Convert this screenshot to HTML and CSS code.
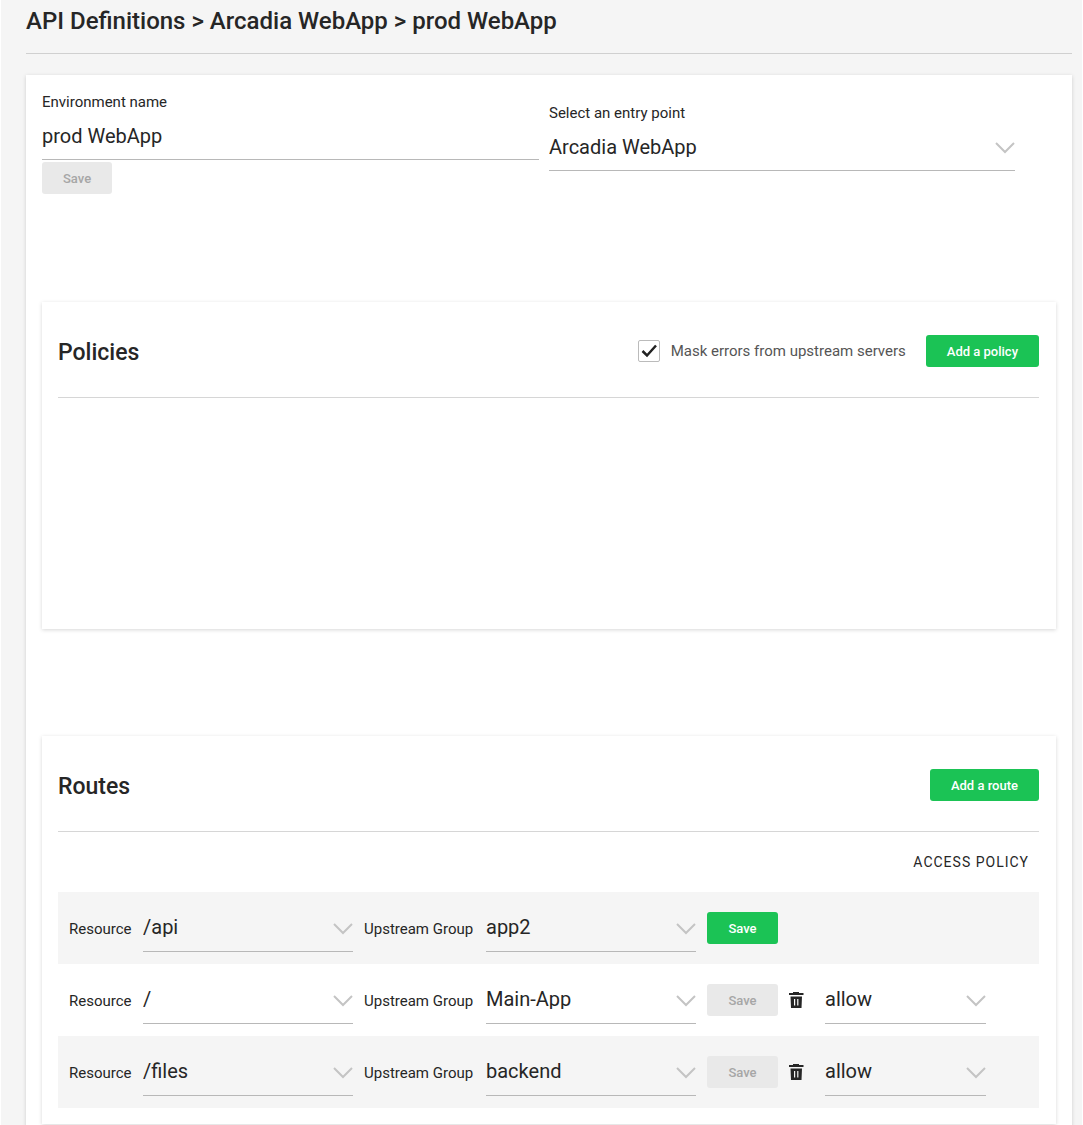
FILE: index.html
```html
<!DOCTYPE html>
<html lang="en">
<head>
<meta charset="utf-8">
<meta name="viewport" content="width=device-width, initial-scale=1">
<title>prod WebApp</title>
<link rel="stylesheet" href="styles.css">
</head>
<body>
<svg class="sprite" aria-hidden="true">
  <symbol id="chevron" viewBox="0 0 20 12"><path d="M1 1l9 9 9-9" fill="none" stroke="currentColor" stroke-width="2"/></symbol>
  <symbol id="trash" viewBox="0 0 16 16"><path fill="currentColor" fill-rule="evenodd" d="M4 0h6v1h4.500v2H0V1h4zM1.500 4.500h11.500l-.5 11.500h-10.500zM5 7v6.500h1.200V7zM8.200 7v6.500h1.200V7z"/></symbol>
</svg>
<main class="page">
  <h1 class="page-title">API Definitions &gt; Arcadia WebApp &gt; prod WebApp</h1>
  <div class="card">
    <div class="settings">
      <form class="setting">
        <label class="field-label" for="env-name">Environment name</label>
        <input class="field" id="env-name" type="text" value="prod WebApp">
        <button class="button form-save" type="button" disabled>Save</button>
      </form>
      <div class="setting setting-entry">
        <label class="field-label" for="entry">Select an entry point</label>
        <div class="picker">
          <select class="field" id="entry"><option>Arcadia WebApp</option></select>
          <svg class="chevron"><use href="#chevron"/></svg>
        </div>
      </div>
    </div>

    <section class="panel policies">
      <header class="panel-header">
        <h2 class="panel-title">Policies</h2>
        <label class="check"><input class="check-box" type="checkbox" checked>Mask errors from upstream servers</label>
        <button class="button" type="button">Add a policy</button>
      </header>
    </section>

    <section class="panel">
      <header class="panel-header">
        <h2 class="panel-title">Routes</h2>
        <button class="button" type="button">Add a route</button>
      </header>
      <div class="column-head">Access policy</div>
      <ul class="routes">
        <li class="route">
          <label class="row-label" for="res-1">Resource</label>
          <div class="picker"><select class="field" id="res-1"><option>/api</option></select><svg class="chevron"><use href="#chevron"/></svg></div>
          <label class="row-label" for="up-1">Upstream Group</label>
          <div class="picker"><select class="field" id="up-1"><option>app2</option></select><svg class="chevron"><use href="#chevron"/></svg></div>
          <button class="button" type="button">Save</button>
        </li>
        <li class="route">
          <label class="row-label" for="res-2">Resource</label>
          <div class="picker"><select class="field" id="res-2"><option>/</option></select><svg class="chevron"><use href="#chevron"/></svg></div>
          <label class="row-label" for="up-2">Upstream Group</label>
          <div class="picker"><select class="field" id="up-2"><option>Main-App</option></select><svg class="chevron"><use href="#chevron"/></svg></div>
          <button class="button" type="button" disabled>Save</button>
          <button class="icon-button" type="button" aria-label="Delete route"><svg class="trash"><use href="#trash"/></svg></button>
          <div class="picker access"><select class="field" aria-label="Access policy"><option>allow</option></select><svg class="chevron"><use href="#chevron"/></svg></div>
        </li>
        <li class="route">
          <label class="row-label" for="res-3">Resource</label>
          <div class="picker"><select class="field" id="res-3"><option>/files</option></select><svg class="chevron"><use href="#chevron"/></svg></div>
          <label class="row-label" for="up-3">Upstream Group</label>
          <div class="picker"><select class="field" id="up-3"><option>backend</option></select><svg class="chevron"><use href="#chevron"/></svg></div>
          <button class="button" type="button" disabled>Save</button>
          <button class="icon-button" type="button" aria-label="Delete route"><svg class="trash"><use href="#trash"/></svg></button>
          <div class="picker access"><select class="field" aria-label="Access policy"><option>allow</option></select><svg class="chevron"><use href="#chevron"/></svg></div>
        </li>
      </ul>
    </section>
  </div>
</main>
</body>
</html>
```
FILE: styles.css
```css
* { box-sizing: border-box; }

body {
  margin: 0 1px;
  background: #fff;
  color: #262626;
  font: 15px/20px Roboto, "Liberation Sans", sans-serif;
}

h1, h2, ul { margin: 0; padding: 0; }
button, input, select { font: inherit; color: inherit; }
.sprite { display: none; }

.page {
  padding: 0 10px 0 25px;
  background: #f5f5f5;
}

.page-title {
  padding: 5px 0 16px;
  border-bottom: 1px solid #d0d0d0;
  font-size: 24px;
  line-height: 32px;
  font-weight: 500;
}

.card {
  margin-top: 21px;
  padding: 16px;
  background: #fff;
  box-shadow: 0 1px 4px rgba(0, 0, 0, .16);
}

.settings {
  display: grid;
  grid-template-columns: 1fr 1fr;
  min-height: 211px;
}

.setting { padding: 1px 10px 0 0; }
.setting-entry { padding: 12px 41px 0 0; }
.field-label { display: block; }

.field {
  display: block;
  width: 100%;
  height: 48px;
  padding: 0;
  border: 0;
  border-bottom: 1px solid #b8b8b8;
  border-radius: 0;
  outline: 0;
  background: transparent;
  appearance: none;
  font-size: 20px;
}

.picker { position: relative; }
.picker .field { padding-right: 24px; }

.chevron {
  position: absolute;
  top: 19px;
  right: 0;
  width: 20px;
  height: 12px;
  color: #c4c4c4;
  pointer-events: none;
}

.button {
  height: 32px;
  padding: 2px 21px 0;
  border: 0;
  border-radius: 3px;
  background: #1bc355;
  color: #fff;
  font-size: 13px;
  font-weight: 500;
  white-space: nowrap;
}
.button:disabled { background: #e9e9e9; color: #a6a6a6; }
.form-save { margin-top: 2px; }

.panel {
  padding: 0 17px 16px 16px;
  background: #fff;
  box-shadow: 0 1px 4px rgba(0, 0, 0, .16);
}
.policies { min-height: 327px; margin-bottom: 107px; }

.panel-header {
  display: flex;
  align-items: center;
  padding: 32px 0 29px;
  border-bottom: 1px solid #d6d6d6;
}
.panel-title {
  margin-right: auto;
  padding-top: 4px;
  font-size: 23px;
  line-height: 30px;
  font-weight: 500;
}

.check {
  display: flex;
  align-items: center;
  gap: 11px;
  margin-right: 20px;
  color: #555;
}
.check-box {
  width: 22px;
  height: 22px;
  margin: 0;
  border: 1px solid #bbb;
  border-radius: 2px;
  appearance: none;
  background: #fff url("data:image/svg+xml,%3Csvg xmlns='http://www.w3.org/2000/svg' viewBox='0 0 20 20'%3E%3Cpath d='M3.500 10l4.500 4.500 9-10' fill='none' stroke='%23222' stroke-width='2.500'/%3E%3C/svg%3E");
}

.column-head {
  padding: 20px 10px;
  text-align: right;
  text-transform: uppercase;
  font-size: 14px;
  letter-spacing: 1px;
}

.routes { list-style: none; }
.route {
  display: grid;
  grid-template-columns: 63px 210fr 111px 210fr 71px 25px 203fr;
  align-items: center;
  gap: 11px;
  height: 72px;
  padding: 0 11px;
}
.route:nth-child(odd) { background: #f5f5f5; }
.route .field { padding-bottom: 2px; }
.row-label { padding-top: 2px; white-space: nowrap; }
.access { margin-right: 42px; }

.icon-button {
  height: 32px;
  padding: 0;
  border: 0;
  background: none;
  text-align: left;
}
.trash { display: block; width: 16px; height: 16px; }
```
